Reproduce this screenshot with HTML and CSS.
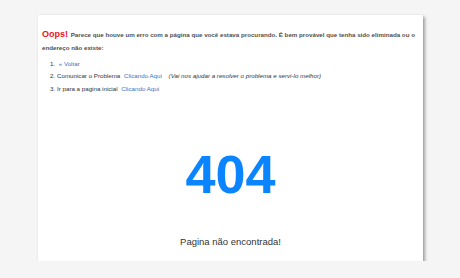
FILE: index.html
```html
<!DOCTYPE html>
<html lang="pt-BR">
<head>
<meta charset="utf-8">
<title>Página não encontrada</title>
<link rel="stylesheet" href="styles.css">
</head>
<body>
<div class="card">
  <p class="intro"><span class="oops">Oops!</span> Parece que houve um erro com a página que você estava procurando. É bem provável que tenha sido eliminada ou o endereço não existe:</p>
  <ol class="steps">
    <li><a href="#" class="link">&nbsp;« Voltar</a></li>
    <li>Comunicar o Problema <a href="#" class="link gap">Clicando Aqui</a> <em class="note">(Vai nos ajudar a resolver o problema e servi-lo melhor)</em></li>
    <li>Ir para a pagina inicial <a href="#" class="link gap">Clicando Aqui</a></li>
  </ol>
  <div class="code">404</div>
  <div class="msg">Pagina não encontrada!</div>
</div>
</body>
</html>
```

FILE: styles.css
```css
html, body {
  margin: 0;
  padding: 0;
  background: #f5f5f5;
}
body {
  font-family: "Liberation Sans", Arial, sans-serif;
  color: #333;
}
.card {
  box-sizing: border-box;
  margin: 15px 0 0 38px;
  width: 385px;
  height: 246px;
  background: #fff;
  padding: 13px 4px 0 4px;
  box-shadow: 0 0 1px rgba(0,0,0,0.12), 2px 2px 3px rgba(0,0,0,0.35);
}
.intro {
  margin: 0;
  font-size: 6.2px;
  line-height: 13px;
  font-weight: bold;
  color: #505050;
}
.oops {
  font-size: 9px;
  color: #e8141b;
  margin-right: 1px;
}
.steps {
  margin: 3.5px 0 0 0;
  padding-left: 15px;
  font-size: 6.2px;
  line-height: 12.5px;
  color: #333;
}
.link {
  color: #3b73c4;
  text-decoration: none;
}
.gap {
  margin-left: 2px;
}
.note {
  margin-left: 5px;
}
.code {
  margin-top: 52px;
  text-align: center;
  font-size: 54px;
  line-height: 54px;
  font-weight: bold;
  color: #0b84ff;
}
.msg {
  margin-top: 35px;
  text-align: center;
  font-size: 9.5px;
  line-height: 12px;
  color: #333;
}
```
